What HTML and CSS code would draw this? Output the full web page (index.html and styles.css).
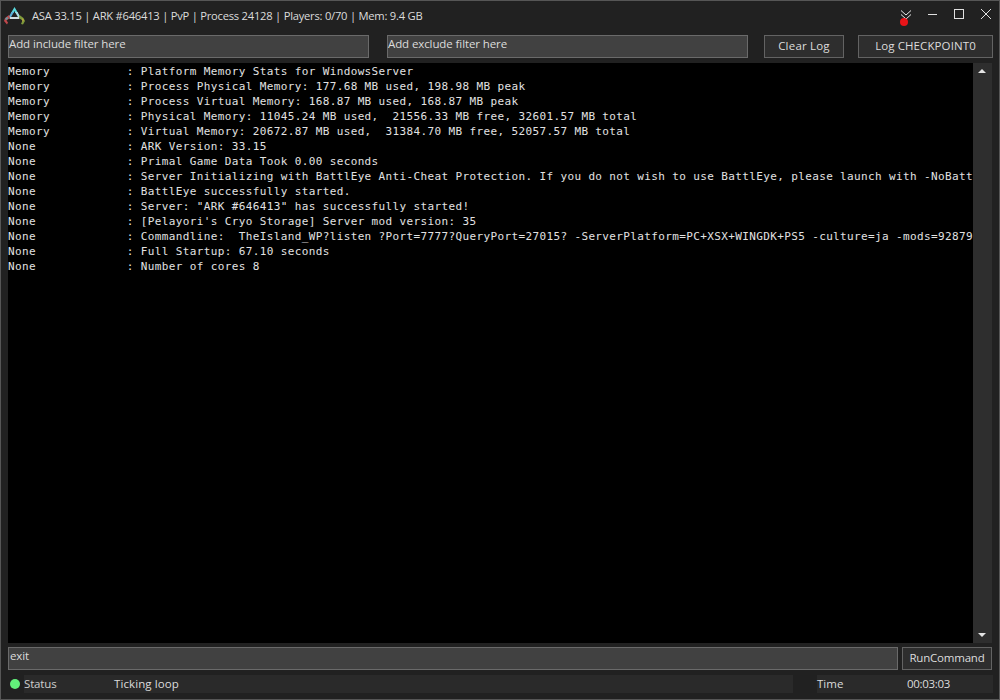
FILE: index.html
```html
<!DOCTYPE html>
<html>
<head>
<meta charset="utf-8">
<title>ASA</title>
<link rel="stylesheet" href="styles.css">
</head>
<body>
<div class="window">
  <header class="titlebar">
    <svg class="logo" width="21" height="18" viewBox="0 0 21 18">
      <path d="M10.500 0 L14 6 L11.500 6 L10.500 4 L9.500 6 L7 6 Z" fill="#58d8dc"/>
      <path d="M7.500 5 L10 5 L6.500 11 L4 11 Z" fill="#58b0d8"/>
      <path d="M11 5 L13.500 5 L17 11 L14.500 11 Z" fill="#a8dfe6"/>
      <path d="M6 10 H15 L15.500 12 H5.500 Z" fill="#d0dde0"/>
      <path d="M5 8 L1 11 L0 14 L3 17.500 L4 15.500 L2.500 13.500 L6 11 Z" fill="#c0484c"/>
      <path d="M3 10 L1 12 L2.500 13 L4.500 11 Z" fill="#5aa0a8"/>
      <path d="M15.500 8 L19.500 11 L21 14 L19 17.500 L17 17 L18.500 13.500 L15 11 Z" fill="#7e9a3c"/>
      <path d="M18 11 L20 13 L18.500 15 Z" fill="#c0a83c"/>
    </svg>
    <span class="title">ASA 33.15 | ARK #646413 | PvP | Process 24128 | Players: 0/70 | Mem: 9.4 GB</span>
    <div class="controls">
      <div class="notify">
        <svg width="14" height="12" viewBox="0 0 14 12"><path d="M3 0.500 L8 5 L13 0.500 M3 4.500 L8 9 L13 4.500" fill="none" stroke="#e8e8e8" stroke-width="1"/></svg>
        <span class="dot"></span>
      </div>
      <svg class="ctl-min" width="9" height="10" viewBox="0 0 9 10"><path d="M0 5.500 H9" stroke="#e0e0e0" stroke-width="1"/></svg>
      <svg class="ctl-max" width="10" height="10" viewBox="0 0 10 10"><rect x="0.500" y="0.500" width="9" height="9" fill="none" stroke="#e0e0e0" stroke-width="1"/></svg>
      <svg class="ctl-close" width="10" height="10" viewBox="0 0 10 10"><path d="M0 0 L10 10 M10 0 L0 10" stroke="#e0e0e0" stroke-width="1"/></svg>
    </div>
  </header>

  <div class="toolbar">
    <div class="field include">Add include filter here</div>
    <div class="field exclude">Add exclude filter here</div>
    <div class="btn clear">Clear Log</div>
    <div class="btn checkpoint">Log CHECKPOINT0</div>
  </div>

  <div class="logarea">
    <pre class="log">Memory           : Platform Memory Stats for WindowsServer
Memory           : Process Physical Memory: 177.68 MB used, 198.98 MB peak
Memory           : Process Virtual Memory: 168.87 MB used, 168.87 MB peak
Memory           : Physical Memory: 11045.24 MB used,  21556.33 MB free, 32601.57 MB total
Memory           : Virtual Memory: 20672.87 MB used,  31384.70 MB free, 52057.57 MB total
None             : ARK Version: 33.15
None             : Primal Game Data Took 0.00 seconds
None             : Server Initializing with BattlEye Anti-Cheat Protection. If you do not wish to use BattlEye, please launch with -NoBatt
None             : BattlEye successfully started.
None             : Server: "ARK #646413" has successfully started!
None             : [Pelayori's Cryo Storage] Server mod version: 35
None             : Commandline:  TheIsland_WP?listen ?Port=7777?QueryPort=27015? -ServerPlatform=PC+XSX+WINGDK+PS5 -culture=ja -mods=92879
None             : Full Startup: 67.10 seconds
None             : Number of cores 8</pre>
    <div class="scrollbar">
      <span class="arrow up"></span>
      <span class="arrow down"></span>
    </div>
  </div>

  <div class="commandrow">
    <div class="field command">exit</div>
    <div class="btn run">RunCommand</div>
  </div>

  <footer class="statusbar">
    <span class="led"></span>
    <div class="cell status-cell">
      <span class="status-label">Status</span>
      <span class="status-value">Ticking loop</span>
    </div>
    <div class="cell time-cell">
      <span class="time-label">Time</span>
      <span class="time-value">00:03:03</span>
    </div>
  </footer>
</div>
</body>
</html>
```

FILE: styles.css
```css
html, body {
  margin: 0;
  padding: 0;
  width: 1000px;
  height: 700px;
  overflow: hidden;
  background: #212121;
}
.window {
  box-sizing: border-box;
  width: 1000px;
  height: 700px;
  border: 1px solid #565656;
  background: #212121;
  color: #dcdcdc;
  font-family: "Open Sans", "Noto Sans", sans-serif;
  font-size: 11.500px;
  display: flex;
  flex-direction: column;
}
.titlebar {
  height: 29px;
  display: flex;
  align-items: center;
  flex: none;
}
.logo {
  margin-left: 3px;
  margin-top: 0;
  flex: none;
}
.title {
  margin-left: 7px;
  font-size: 11.200px;
  letter-spacing: -0.240px;
  white-space: nowrap;
}
.controls {
  margin-left: auto;
  display: flex;
  align-items: center;
  margin-right: 8px;
  margin-bottom: 4px;
}
.notify {
  position: relative;
  width: 14px;
  height: 16px;
  margin-right: 16px;
}
.notify svg {
  display: block;
  margin-top: 4px;
}
.dot {
  position: absolute;
  left: 2px;
  top: 12px;
  width: 8px;
  height: 8px;
  border-radius: 50%;
  background: #e81418;
}
.ctl-min { margin-right: 17px; }
.ctl-max { margin-right: 17px; }
.toolbar {
  height: 23px;
  margin-top: 5px;
  padding-left: 7px;
  display: flex;
  flex: none;
}
.field {
  box-sizing: border-box;
  height: 23px;
  background: #414141;
  border: 1px solid #6a6a6a;
  padding-left: 0;
  line-height: 16px;
  color: #dcdcdc;
  letter-spacing: -0.100px;
  white-space: nowrap;
}
.include { width: 361px; }
.exclude { width: 361px; margin-left: 18px; }
.btn {
  box-sizing: border-box;
  height: 23px;
  background: #2e2e2e;
  border: 1px solid #636363;
  text-align: center;
  line-height: 19px;
  white-space: nowrap;
}
.clear { width: 80px; margin-left: 16px; letter-spacing: 0.200px; }
.checkpoint { width: 135px; margin-left: 14px; letter-spacing: 0.100px; }
.logarea {
  height: 580px;
  margin: 5px 7px 0 7px;
  display: flex;
  flex: none;
  background: #000;
}
.log {
  margin: 0;
  flex: 1;
  min-width: 0;
  overflow: hidden;
  padding-top: 1px;
  font-family: "DejaVu Sans Mono", monospace;
  font-size: 11px;
  letter-spacing: 0.370px;
  line-height: 15px;
  color: #e2e2e2;
  background: #000;
}
.scrollbar {
  width: 19px;
  flex: none;
  background: #2e2e2e;
  position: relative;
}
.arrow {
  position: absolute;
  left: 5px;
  width: 0;
  height: 0;
  border-left: 4px solid transparent;
  border-right: 4px solid transparent;
}
.arrow.up { top: 6px; border-bottom: 4px solid #e4e4e4; }
.arrow.down { bottom: 6px; border-top: 4px solid #e4e4e4; }
.commandrow {
  height: 23px;
  margin-top: 4px;
  padding-left: 7px;
  display: flex;
  flex: none;
}
.command { width: 890px; padding-left: 1px; line-height: 15px; }
.run { width: 90px; margin-left: 4px; letter-spacing: -0.200px; }
.statusbar {
  height: 18px;
  margin-top: 5px;
  padding-left: 9px;
  display: flex;
  align-items: center;
  flex: none;
}
.led {
  width: 10px;
  height: 10px;
  border-radius: 50%;
  background: #62f07a;
  flex: none;
}
.cell {
  height: 18px;
  line-height: 17px;
  background: #2a2a2a;
  display: flex;
  white-space: nowrap;
  box-sizing: border-box;
}
.status-cell { width: 769px; margin-left: 4px; }
.status-label { width: 90px; color: #cfcfcf; letter-spacing: -0.150px; }
.status-value { letter-spacing: 0.100px; }
.time-cell { width: 176px; margin-left: 24px; }
.time-label { width: 90px; }
.time-value { letter-spacing: -0.300px; }
```
